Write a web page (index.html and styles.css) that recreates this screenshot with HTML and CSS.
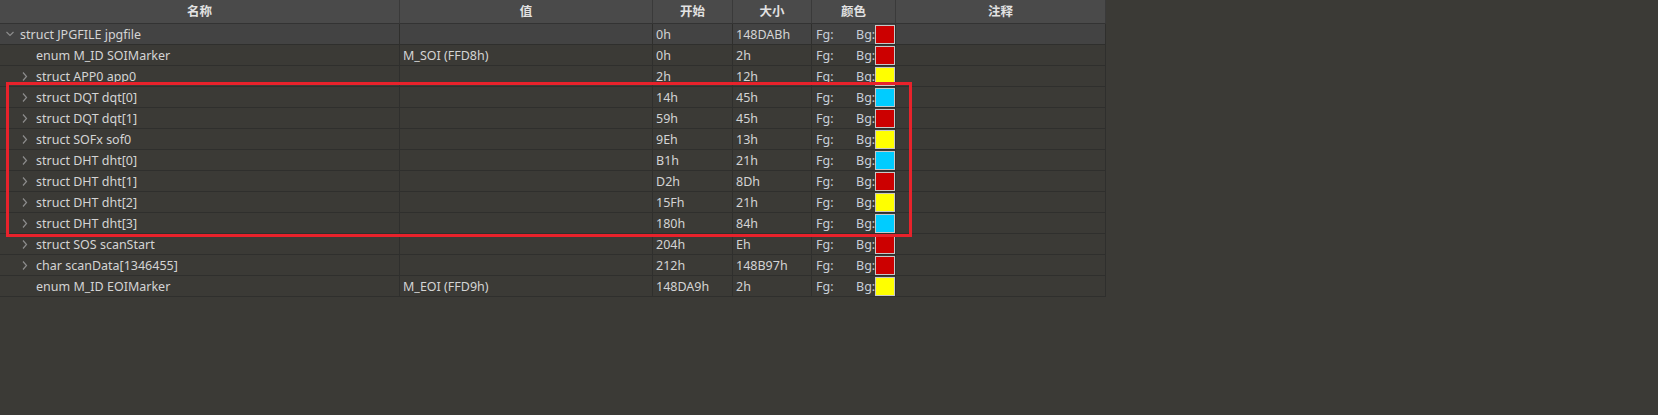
FILE: index.html
```html
<!DOCTYPE html>
<html lang="zh">
<head>
<meta charset="utf-8">
<title>Template Results</title>
<link rel="stylesheet" href="styles.css">
</head>
<body>
<div class="view">
  <div class="grid">
    <div class="row head">
      <div class="cell c-name">名称</div>
      <div class="cell c-val">值</div>
      <div class="cell c-start">开始</div>
      <div class="cell c-size">大小</div>
      <div class="cell c-color">颜色</div>
      <div class="cell c-note">注释</div>
    </div>

    <div class="row current">
      <div class="cell c-name lvl0"><svg class="tw" width="8" height="6" viewBox="0 0 8 6"><polyline points="0.5,1 4,4.5 7.5,1" /></svg>struct JPGFILE jpgfile</div>
      <div class="cell c-val"></div>
      <div class="cell c-start">0h</div>
      <div class="cell c-size">148DABh</div>
      <div class="cell c-color"><span class="fg">Fg:</span><span class="bg">Bg:</span><span class="sw red"></span></div>
      <div class="cell c-note"></div>
    </div>

    <div class="row">
      <div class="cell c-name lvl1"><span class="nt"></span>enum M_ID SOIMarker</div>
      <div class="cell c-val">M_SOI (FFD8h)</div>
      <div class="cell c-start">0h</div>
      <div class="cell c-size">2h</div>
      <div class="cell c-color"><span class="fg">Fg:</span><span class="bg">Bg:</span><span class="sw red"></span></div>
      <div class="cell c-note"></div>
    </div>

    <div class="row">
      <div class="cell c-name lvl1"><svg class="tw" width="8" height="9" viewBox="0 0 8 9"><polyline points="2,0.5 5.5,4.5 2,8.5" /></svg>struct APP0 app0</div>
      <div class="cell c-val"></div>
      <div class="cell c-start">2h</div>
      <div class="cell c-size">12h</div>
      <div class="cell c-color"><span class="fg">Fg:</span><span class="bg">Bg:</span><span class="sw yellow"></span></div>
      <div class="cell c-note"></div>
    </div>

    <div class="row">
      <div class="cell c-name lvl1"><svg class="tw" width="8" height="9" viewBox="0 0 8 9"><polyline points="2,0.5 5.5,4.5 2,8.5" /></svg>struct DQT dqt[0]</div>
      <div class="cell c-val"></div>
      <div class="cell c-start">14h</div>
      <div class="cell c-size">45h</div>
      <div class="cell c-color"><span class="fg">Fg:</span><span class="bg">Bg:</span><span class="sw cyan"></span></div>
      <div class="cell c-note"></div>
    </div>

    <div class="row">
      <div class="cell c-name lvl1"><svg class="tw" width="8" height="9" viewBox="0 0 8 9"><polyline points="2,0.5 5.5,4.5 2,8.5" /></svg>struct DQT dqt[1]</div>
      <div class="cell c-val"></div>
      <div class="cell c-start">59h</div>
      <div class="cell c-size">45h</div>
      <div class="cell c-color"><span class="fg">Fg:</span><span class="bg">Bg:</span><span class="sw red"></span></div>
      <div class="cell c-note"></div>
    </div>

    <div class="row">
      <div class="cell c-name lvl1"><svg class="tw" width="8" height="9" viewBox="0 0 8 9"><polyline points="2,0.5 5.5,4.5 2,8.5" /></svg>struct SOFx sof0</div>
      <div class="cell c-val"></div>
      <div class="cell c-start">9Eh</div>
      <div class="cell c-size">13h</div>
      <div class="cell c-color"><span class="fg">Fg:</span><span class="bg">Bg:</span><span class="sw yellow"></span></div>
      <div class="cell c-note"></div>
    </div>

    <div class="row">
      <div class="cell c-name lvl1"><svg class="tw" width="8" height="9" viewBox="0 0 8 9"><polyline points="2,0.5 5.5,4.5 2,8.5" /></svg>struct DHT dht[0]</div>
      <div class="cell c-val"></div>
      <div class="cell c-start">B1h</div>
      <div class="cell c-size">21h</div>
      <div class="cell c-color"><span class="fg">Fg:</span><span class="bg">Bg:</span><span class="sw cyan"></span></div>
      <div class="cell c-note"></div>
    </div>

    <div class="row">
      <div class="cell c-name lvl1"><svg class="tw" width="8" height="9" viewBox="0 0 8 9"><polyline points="2,0.5 5.5,4.5 2,8.5" /></svg>struct DHT dht[1]</div>
      <div class="cell c-val"></div>
      <div class="cell c-start">D2h</div>
      <div class="cell c-size">8Dh</div>
      <div class="cell c-color"><span class="fg">Fg:</span><span class="bg">Bg:</span><span class="sw red"></span></div>
      <div class="cell c-note"></div>
    </div>

    <div class="row">
      <div class="cell c-name lvl1"><svg class="tw" width="8" height="9" viewBox="0 0 8 9"><polyline points="2,0.5 5.5,4.5 2,8.5" /></svg>struct DHT dht[2]</div>
      <div class="cell c-val"></div>
      <div class="cell c-start">15Fh</div>
      <div class="cell c-size">21h</div>
      <div class="cell c-color"><span class="fg">Fg:</span><span class="bg">Bg:</span><span class="sw yellow"></span></div>
      <div class="cell c-note"></div>
    </div>

    <div class="row">
      <div class="cell c-name lvl1"><svg class="tw" width="8" height="9" viewBox="0 0 8 9"><polyline points="2,0.5 5.5,4.5 2,8.5" /></svg>struct DHT dht[3]</div>
      <div class="cell c-val"></div>
      <div class="cell c-start">180h</div>
      <div class="cell c-size">84h</div>
      <div class="cell c-color"><span class="fg">Fg:</span><span class="bg">Bg:</span><span class="sw cyan"></span></div>
      <div class="cell c-note"></div>
    </div>

    <div class="row">
      <div class="cell c-name lvl1"><svg class="tw" width="8" height="9" viewBox="0 0 8 9"><polyline points="2,0.5 5.5,4.5 2,8.5" /></svg>struct SOS scanStart</div>
      <div class="cell c-val"></div>
      <div class="cell c-start">204h</div>
      <div class="cell c-size">Eh</div>
      <div class="cell c-color"><span class="fg">Fg:</span><span class="bg">Bg:</span><span class="sw red"></span></div>
      <div class="cell c-note"></div>
    </div>

    <div class="row">
      <div class="cell c-name lvl1"><svg class="tw" width="8" height="9" viewBox="0 0 8 9"><polyline points="2,0.5 5.5,4.5 2,8.5" /></svg>char scanData[1346455]</div>
      <div class="cell c-val"></div>
      <div class="cell c-start">212h</div>
      <div class="cell c-size">148B97h</div>
      <div class="cell c-color"><span class="fg">Fg:</span><span class="bg">Bg:</span><span class="sw red"></span></div>
      <div class="cell c-note"></div>
    </div>

    <div class="row">
      <div class="cell c-name lvl1"><span class="nt"></span>enum M_ID EOIMarker</div>
      <div class="cell c-val">M_EOI (FFD9h)</div>
      <div class="cell c-start">148DA9h</div>
      <div class="cell c-size">2h</div>
      <div class="cell c-color"><span class="fg">Fg:</span><span class="bg">Bg:</span><span class="sw yellow"></span></div>
      <div class="cell c-note"></div>
    </div>
  </div>
  <div class="mark"></div>
</div>
</body>
</html>
```

FILE: styles.css
```css
html, body {
  margin: 0;
  padding: 0;
  background: #3b3a36;
}
body {
  font-family: "Noto Sans", "Noto Sans CJK SC", sans-serif;
  font-size: 12.5px;
  color: #d4d4d4;
}
.view {
  position: relative;
  width: 1658px;
  height: 415px;
}
.grid {
  display: flex;
  flex-direction: column;
  width: 1106px;
}
.row {
  display: flex;
  height: 21px;
}
.row.current {
  background: #434343;
}
.cell {
  box-sizing: border-box;
  height: 100%;
  border-right: 1px solid #2f2f2d;
  border-bottom: 1px solid #2f2f2d;
  display: flex;
  align-items: center;
  padding-left: 3px;
  padding-top: 2px;
  white-space: nowrap;
  overflow: hidden;
  line-height: 18px;
}
.head {
  height: 24px;
}
.head .cell {
  background: #4a4a4a;
  justify-content: center;
  padding-left: 0;
  padding-top: 1px;
  color: #e2e2e2;
  font-weight: 700;
  border-right: 1px solid #3a3a3a;
  border-bottom: 1px solid #333333;
  line-height: 22px;
}
.c-name { width: 400px; }
.c-val { width: 253px; }
.c-start { width: 80px; }
.c-size { width: 79px; }
.c-color { width: 84px; padding-left: 4px; }
.c-note { width: 210px; }

.lvl0 { padding-left: 6px; }
.lvl1 { padding-left: 21px; }
.tw {
  fill: none;
  stroke: #8c8c8c;
  stroke-width: 1.2;
  flex: none;
  margin-top: -2px;
}
.lvl0 .tw { margin-right: 6px; }
.lvl1 .tw { margin-right: 7px; }
.nt {
  display: inline-block;
  width: 15px;
  flex: none;
}
.fg {
  color: #c9cfd8;
  width: 40px;
  flex: none;
}
.bg {
  color: #c9cfd8;
  flex: none;
}
.sw {
  box-sizing: border-box;
  width: 20px;
  height: 19px;
  border: 1px solid #c8c8c8;
  flex: none;
  margin-top: -2px;
}
.sw.red { background: #cc0000; }
.sw.yellow { background: #ffff00; }
.sw.cyan { background: #00ccff; }

.mark {
  position: absolute;
  left: 6px;
  top: 82px;
  width: 906px;
  height: 155px;
  box-sizing: border-box;
  border: 3px solid #e8222b;
}
```
